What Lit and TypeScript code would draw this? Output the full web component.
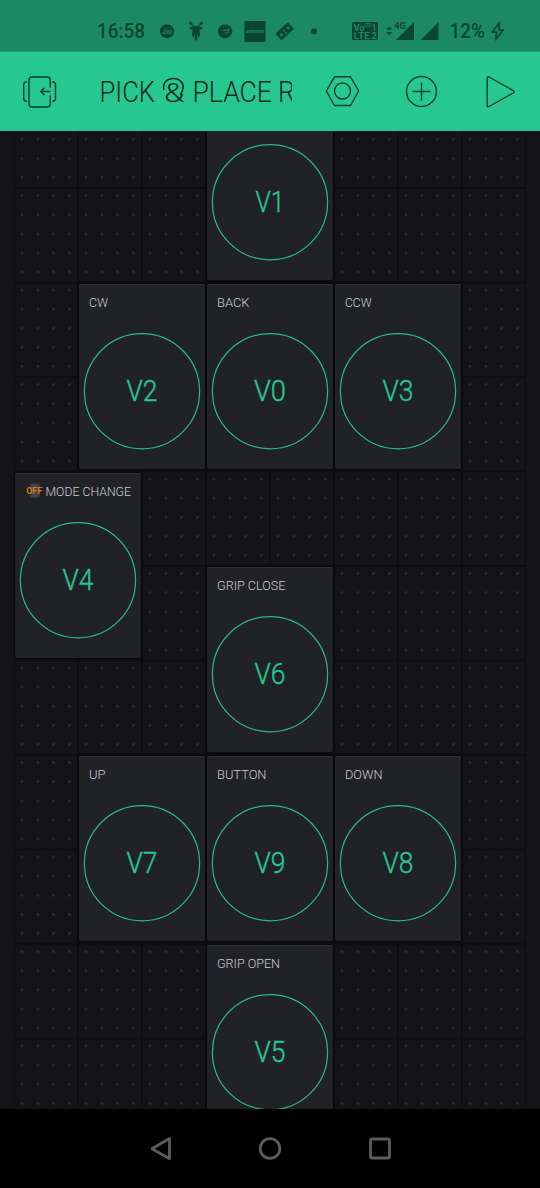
import { LitElement, html, svg, css } from "lit";
import { customElement, property } from "lit/decorators.js";

interface Widget {
  pin: string;
  label: string;
  labelWidth: number;
  pinWidth: number;
  column: number;
  row: number;
  off?: boolean;
}

const WIDGETS: Widget[] = [
  { pin: "V1", label: "", labelWidth: 0, pinWidth: 29, column: 4, row: 1 },
  { pin: "V2", label: "CW", labelWidth: 19, pinWidth: 31, column: 2, row: 3 },
  { pin: "V0", label: "BACK", labelWidth: 32.5, pinWidth: 32, column: 4, row: 3 },
  { pin: "V3", label: "CCW", labelWidth: 26.5, pinWidth: 31, column: 6, row: 3 },
  { pin: "V4", label: "MODE CHANGE", labelWidth: 85.5, pinWidth: 31, column: 1, row: 5, off: true },
  { pin: "V6", label: "GRIP CLOSE", labelWidth: 68.5, pinWidth: 31, column: 4, row: 6 },
  { pin: "V7", label: "UP", labelWidth: 16.5, pinWidth: 31, column: 2, row: 8 },
  { pin: "V9", label: "BUTTON", labelWidth: 49.5, pinWidth: 31, column: 4, row: 8 },
  { pin: "V8", label: "DOWN", labelWidth: 37.5, pinWidth: 31, column: 6, row: 8 },
  { pin: "V5", label: "GRIP OPEN", labelWidth: 63, pinWidth: 31, column: 4, row: 10 },
];

@customElement("status-bar")
class StatusBar extends LitElement {
  static styles = css`
    :host { display: block; height: 52px; background: #1b8963; border-bottom: 1px solid #1fa577; box-sizing: border-box; }
    svg { display: block; }
    text { font-family: Roboto, sans-serif; fill: #0b4630; }
    .clock { font-size: 20px; font-weight: 500; }
    .battery { font-size: 20px; font-weight: 500; }
    .ink { fill: #0b4630; }
    .line { stroke: #0b4630; fill: none; }
    .gap { fill: #1b8963; }
    .tiny { font-weight: 700; fill: #1b8963; }
  `;
  render() {
    return html`<svg width="540" height="51" viewBox="0 0 540 51">
      <text class="clock" x="97" y="38" textLength="48" lengthAdjust="spacingAndGlyphs">16:58</text>
      <circle class="ink" cx="167" cy="31.3" r="7"/>
      <text class="tiny" x="161.8" y="34" font-size="7.5" textLength="10.5">Jio</text>
      <g class="ink">
        <circle cx="190.7" cy="23.3" r="1.6"/><circle cx="201.3" cy="23.3" r="1.6"/>
        <path d="M190.500 23.500l3.500 2.500M201.500 23.500l-3.500 2.500" stroke="#0b4630"/>
        <path d="M189.500 27.500l4-1.500h5l4 1.500v1.500l-3 .5.500 5.500-1.700 2.500-.5-3h-3.600l-.5 3-1.700-2.500.5-5.500-3-.5z"/>
        <rect x="194.500" y="34" width="3" height="6.500" rx="1.500"/>
      </g>
      <circle class="ink" cx="225" cy="31.3" r="7"/>
      <path d="M223 30.300h5.700M225 33h3M228.700 28.500v4" stroke="#1b8963" stroke-width="1"/>
      <path class="line" d="M229 31.200h3.500"/>
      <rect class="ink" x="244.500" y="21" width="21" height="21"/>
      <text class="tiny" x="246" y="33.300" font-size="6" textLength="18" lengthAdjust="spacingAndGlyphs">amazon</text>
      <g transform="rotate(-43 284.5 31.5)">
        <rect class="ink" x="276.300" y="27" width="17" height="9" rx="1"/>
        <circle class="gap" cx="280" cy="31.700" r="1.400"/><circle class="gap" cx="284.700" cy="30.500" r=".9"/><circle class="gap" cx="284.700" cy="33.500" r=".9"/><circle class="gap" cx="289.500" cy="31.500" r="1.300"/>
      </g>
      <circle class="ink" cx="314" cy="31.2" r="3"/>
      <rect class="ink" x="352" y="22" width="26" height="18" rx="1.500"/>
      <text class="tiny" x="353.500" y="30.500" font-size="9.500" textLength="11">Vo</text>
      <text class="tiny" x="364.500" y="27.300" font-size="5" textLength="6.500" lengthAdjust="spacingAndGlyphs">LTE</text>
      <text class="tiny" x="371.500" y="30.500" font-size="9">1</text>
      <text class="tiny" x="353.700" y="39" font-size="9.500" textLength="16">LTE</text>
      <text class="tiny" x="371.500" y="39" font-size="9">2</text>
      <path class="ink" d="M386.300 29.800l3-3.300 3 3.300zM386.300 32l3 3.300 3-3.300z"/>
      <path class="ink" d="M396 40L414 22V40zM420.500 40L438.500 22V40z"/>
      <rect class="gap" x="394" y="20" width="12.500" height="9.500"/>
      <text x="394.300" y="28.500" font-size="9.500" font-weight="700" textLength="11.500" lengthAdjust="spacingAndGlyphs">4G</text>
      <text class="battery" x="449.500" y="38" textLength="35.500" lengthAdjust="spacingAndGlyphs">12%</text>
      <path class="line" stroke-width="1.700" stroke-linejoin="round" d="M499.500 22.500L492.200 32.200H496.600L495.600 39.700L503.300 29.800H498.700Z"/>
    </svg>`;
  }
}

@customElement("title-bar")
class TitleBar extends LitElement {
  static styles = css`
    :host { display: block; height: 79px; background: #26c791; }
    .bar { display: grid; grid-template-columns: 79px 213px 100px 59px 89px; height: 79px; }
    svg { display: block; overflow: hidden; }
    .stroke { fill: none; stroke: #0e3d2e; stroke-width: 1.4; stroke-linecap: round; stroke-linejoin: round; }
    text { font-family: Roboto, sans-serif; font-weight: 300; fill: #092a20; font-size: 29px; }
    .amp { font-size: 25px; }
    .curl { fill: none; stroke: #092a20; stroke-width: 1.5; stroke-linecap: round; }
  `;
  render() {
    return html`<div class="bar">
      <svg width="79" height="79" viewBox="0 0 79 79">
        <g class="stroke">
          <path d="M50.300 35V28a3 3 0 0 0-3-3H32a3 3 0 0 0-3 3V52a3 3 0 0 0 3 3H47.300a3 3 0 0 0 3-3V44"/>
          <path d="M26.500 30a2.800 2.800 0 0 0-2.800 2.800V46.500a2.800 2.800 0 0 0 2.800 2.800M52.800 30a2.800 2.800 0 0 1 2.700 2.800V46.500a2.800 2.800 0 0 1-2.700 2.800M50 39.500H40.700M44 36.300L40.700 39.500L44 42.700"/>
        </g>
      </svg>
      <svg width="213" height="79" viewBox="79 0 213 79">
        <text x="99.500" y="49.500" textLength="55.500" lengthAdjust="spacingAndGlyphs">PICK</text>
        <text class="amp" x="164" y="49.500" textLength="20.500" lengthAdjust="spacingAndGlyphs">&amp;</text>
        <path class="curl" d="M163.800 37.500C162.500 31 167 26.500 173.500 26.500C180 26.500 184 31.500 183 36.500C182.500 39.200 181.500 41 180.500 42.500"/>
        <text x="192.500" y="49.500" textLength="79.500" lengthAdjust="spacingAndGlyphs">PLACE</text>
        <text x="278" y="49.500" textLength="17" lengthAdjust="spacingAndGlyphs">R</text>
      </svg>
      <svg width="100" height="79" viewBox="292 0 100 79">
        <path class="stroke" d="M334.500 24.800H350.500L358.700 39L350.500 53.500H334.500L326.300 39Z"/>
        <circle class="stroke" cx="342.500" cy="39" r="8"/>
      </svg>
      <svg width="59" height="79" viewBox="392 0 59 79">
        <circle class="stroke" cx="421.500" cy="39.500" r="15"/>
        <path class="stroke" d="M413 39.500H430M421.500 31V48"/>
      </svg>
      <svg width="89" height="79" viewBox="451 0 89 79">
        <path class="stroke" d="M487.200 26V53.500Q487.200 55.500 489 54.500L513.200 41Q515.200 39.800 513.200 38.600L489 25Q487.200 24.100 487.200 26Z"/>
      </svg>
    </div>`;
  }
}

@customElement("pin-button")
class PinButton extends LitElement {
  @property({ attribute: false }) widget!: Widget;
  static styles = css`
    :host { display: block; margin: 1px 1px 3px; background: #212226; border-radius: 2px; box-shadow: 0 0 2px 1px #08080b, inset 0 1px 0 #303135; }
    svg { display: block; overflow: visible; }
    text { font-family: Roboto, sans-serif; }
    .ring { fill: none; stroke: #29b98a; stroke-width: 1.2; }
    .pin { font-size: 29px; font-weight: 300; fill: #26c791; stroke: #26c791; stroke-width: .4; }
    .label { font-size: 13.3px; font-weight: 350; fill: #cdced0; }
    .off { font-size: 9px; font-weight: 700; fill: #d67b1b; }
  `;
  render() {
    const w = this.widget;
    const labelX = w.off ? 30.5 : 10;
    return html`<svg width="126" height="184" viewBox="0 0 126 184">
      ${w.off ? svg`<rect x="15.500" y="10.500" width="9" height="14" rx="1" fill="#414149"/>
        <text class="off" x="11.200" y="21.300" textLength="16" lengthAdjust="spacingAndGlyphs">OFF</text>` : null}
      ${w.label ? svg`<text class="label" x=${labelX} y="23.200" textLength=${w.labelWidth} lengthAdjust="spacingAndGlyphs">${w.label}</text>` : null}
      <circle class="ring" cx="63" cy="107.200" r="57.600"/>
      <text class="pin" x=${63 - w.pinWidth / 2} y="117.300" textLength=${w.pinWidth} lengthAdjust="spacingAndGlyphs">${w.pin}</text>
    </svg>`;
  }
}

@customElement("nav-bar")
class NavBar extends LitElement {
  static styles = css`
    :host { display: block; height: 79px; background: #000; }
    svg { display: block; }
    .mark { fill: none; stroke: #5c5c5c; stroke-width: 2.8; stroke-linejoin: round; }
  `;
  render() {
    return html`<svg width="540" height="79" viewBox="0 1 540 79">
      <path class="mark" d="M152 40.700L169.500 30.500V50.700Z"/>
      <circle class="mark" cx="270" cy="40.500" r="9.800"/>
      <rect class="mark" x="370.500" y="31" width="19" height="19" rx="1.500"/>
    </svg>`;
  }
}

@customElement("app-root")
class AppRoot extends LitElement {
  static styles = css`
    :host { display: flex; flex-direction: column; width: 540px; height: 1188px; overflow: hidden; background: #131318; }
    .board { display: grid; height: 978px; overflow: hidden; background: #131318; }
    .dots, .cells { grid-area: 1 / 1; }
    .dots { display: block; }
    .cells { display: grid; grid-template-columns: repeat(8, 64px); grid-template-rows: repeat(11, 94.5px); margin-top: -37.5px; padding: 0 14px; }
  `;
  render() {
    const xs = [8, 24, 39.5, 55.5];
    const ys = [7.5, 26.6, 45.7, 64.8, 83.9];
    return html`
      <status-bar></status-bar>
      <title-bar></title-bar>
      <main class="board">
        <svg class="dots" width="540" height="978">
          <defs>
            <pattern id="cell" x="14" y="-37.500" width="64" height="94.500" patternUnits="userSpaceOnUse">
              <path d="M0 0H64M0 94.500H64M0 0V94.500M64 0V94.500" stroke="#0e0e12" stroke-width="2.200"/>
              ${ys.map((y) => xs.map((x) => svg`<circle cx=${x} cy=${y} r="1.500" fill="#29292e"/>`))}
            </pattern>
          </defs>
          <rect x="14" y="0" width="512" height="978" fill="url(#cell)"/>
        </svg>
        <div class="cells">
          ${WIDGETS.map((w) => html`<pin-button .widget=${w} style="grid-area: ${w.row} / ${w.column} / span 2 / span 2"></pin-button>`)}
        </div>
      </main>
      <nav-bar></nav-bar>
    `;
  }
}
